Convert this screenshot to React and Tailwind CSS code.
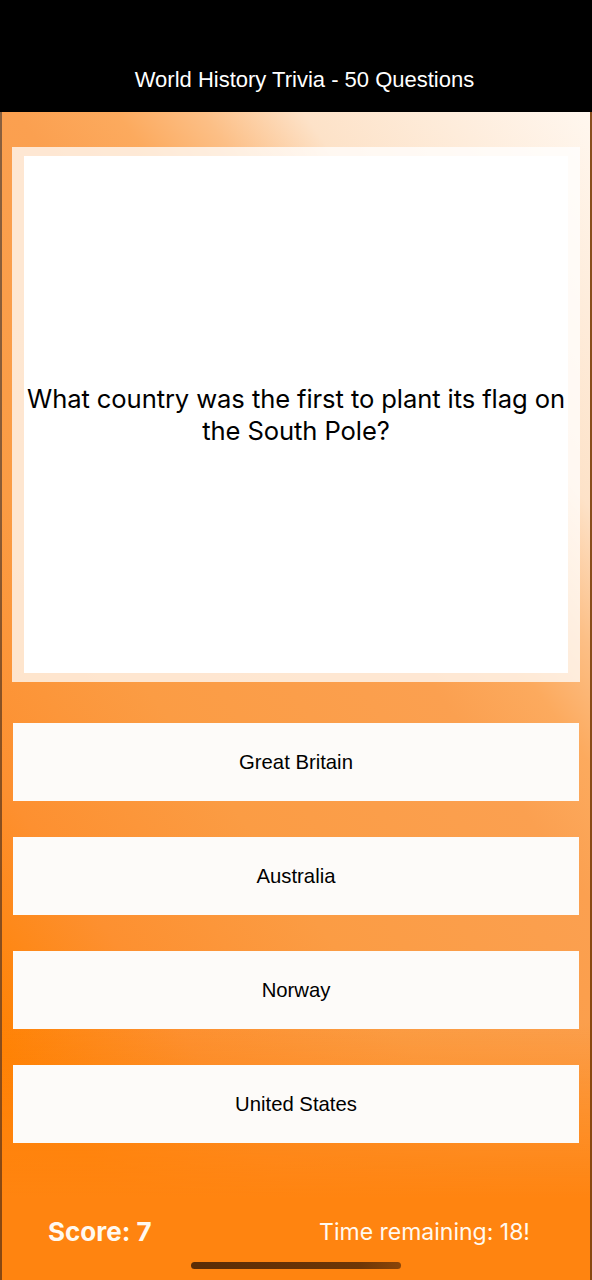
import React from "react";

const answers = ["Great Britain", "Australia", "Norway", "United States"];

export default function App() {
  return (
    <div className="w-[592px] h-[1280px] flex flex-col overflow-hidden bg-black">
      <div className="h-[112px] shrink-0 bg-black flex justify-center pt-[67px] pl-[17px]">
        <span className="text-white text-[22px] leading-[26px] font-['Liberation_Sans',Arial,sans-serif]">
          World History Trivia - 50 Questions
        </span>
      </div>
      <div className="relative flex-1 flex flex-col border-x-2 border-[#6b3a12]/80 bg-[linear-gradient(to_bottom,rgba(255,132,16,0)_78%,rgba(255,132,16,1)_93%),linear-gradient(234deg,#fff7ef_0%,#fde2c8_20%,#fcbf86_27%,#fcaa5e_33%,#fba050_40%,#fb9c44_60%,#fd9030_75%,#ff8204_88%,#ff8000_100%)]">
        <div className="pt-[35px] px-[10px]">
          <div className="h-[535px] bg-white/75 px-[12px] py-[9px]">
            <div className="h-full bg-white flex items-center justify-center">
              <p className="text-center text-black text-[25.6px] leading-[32px] font-['Inter',sans-serif] tracking-[-0.1px]">
                What country was the first to plant its flag on the South Pole?
              </p>
            </div>
          </div>
        </div>
        <div className="flex flex-col gap-[36px] px-[11px] pt-[41px]">
          {answers.map((a) => (
            <div
              key={a}
              className="h-[78px] bg-[#fdfbf9] flex items-center justify-center pt-[1px]"
            >
              <span className="text-black text-[20.3px] font-['Liberation_Sans',Arial,sans-serif]">
                {a}
              </span>
            </div>
          ))}
        </div>
        <div className="flex items-center justify-between pl-[46px] pr-[60px] pt-[73px]">
          <span className="text-[#fff9f0] text-[26px] leading-[32px] font-bold font-['Inter',sans-serif]">
            Score: 7
          </span>
          <span className="text-[#fff9f0] text-[23px] leading-[32px] font-['Inter',sans-serif]">
            Time remaining: 18!
          </span>
        </div>
        <div className="flex justify-center pt-[14px]">
          <div className="w-[210px] h-[7px] rounded-full bg-[linear-gradient(90deg,#5a2c06,#6e3606_80%,#8a4508)]" />
        </div>
      </div>
    </div>
  );
}
